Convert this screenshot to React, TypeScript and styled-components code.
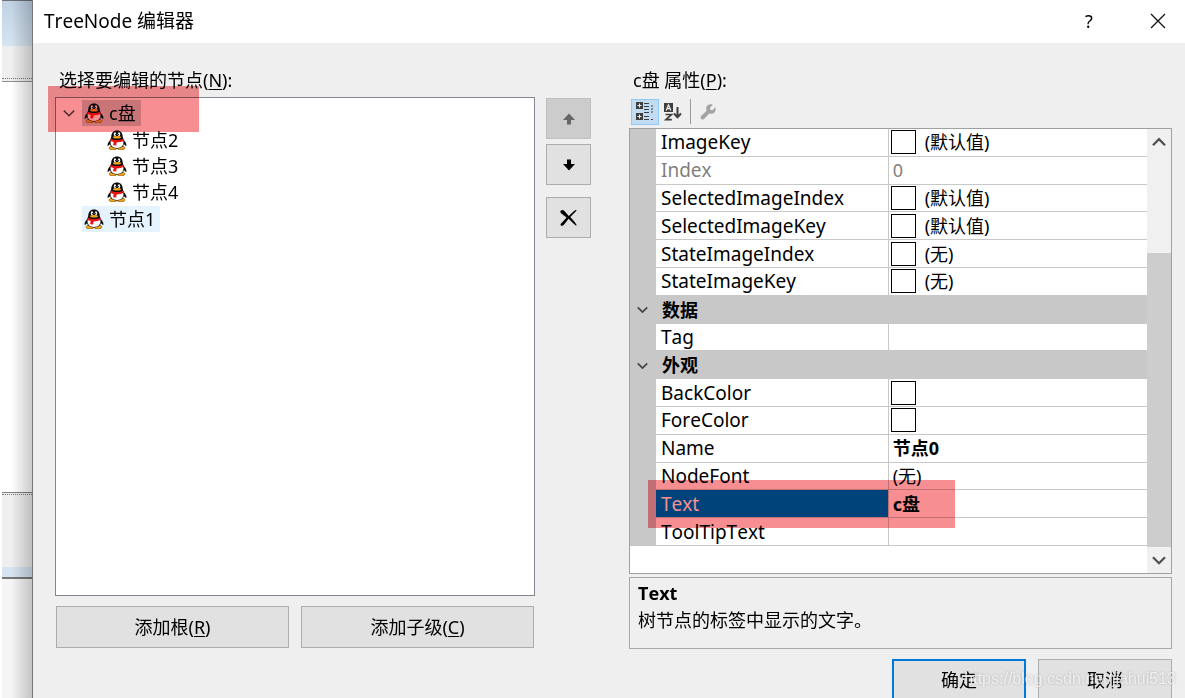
import React from "react";
import styled, { createGlobalStyle } from "styled-components";

const GlobalStyle = createGlobalStyle`
  *, *::before, *::after { box-sizing: border-box; }
  body {
    margin: 0;
    background: #fff;
    color: #000;
    font-family: "Noto Sans", "Noto Sans CJK SC", sans-serif;
    font-size: 18px;
    font-kerning: none;
    line-height: 24px;
    overflow: hidden;
  }
  button { font: inherit; color: inherit; padding: 0; margin: 0; }
  u { text-underline-offset: 2px; text-decoration-thickness: 1px; }
`;

const Desktop = styled.div`
  display: flex;
  min-height: 100vh;
`;

const Backdrop = styled.aside`
  position: relative;
  display: flex;
  flex-direction: column;
  flex: 0 0 32px;
  padding-left: 2px;

  &::after {
    content: "";
    position: absolute;
    inset: 0 0 0 2px;
    background: linear-gradient(to right, transparent 30%, rgba(0, 0, 0, 0.2));
  }
`;

const BackdropCaption = styled.div`
  flex: 0 0 46px;
  border-top: 1px solid #6d7278;
  background: linear-gradient(#c0d2e4, #d6e4f1);
`;

const BackdropToolbar = styled.div`
  flex: 0 0 36px;
  padding-top: 32px;
  background: #efefef;
  border-bottom: 1px solid #8c9096;

  &::after {
    content: "";
    display: block;
    border-top: 1px dotted #777;
  }
`;

const BackdropPage = styled.div`
  flex: 0 0 410px;
  background: #fff;
`;

const BackdropFooter = styled.div`
  flex: 0 0 75px;
  padding-top: 1px;
  background: #efefef;
  border-top: 1px solid #7d8187;

  &::after {
    content: "";
    display: block;
    border-top: 1px dotted #777;
  }
`;

const BackdropEdge = styled.div`
  flex: 0 0 12px;
  background: #d6e4f2;
  border-bottom: 2px solid #777;
`;

const BackdropRest = styled.div`
  flex: 1;
  background: #f5f5f5;
`;

const Dialog = styled.main`
  flex: 1;
  min-width: 0;
  background: #efefef;
  border-left: 1px solid #777;
`;

const TitleBar = styled.header`
  display: flex;
  align-items: center;
  height: 43px;
  padding: 0 10px 2px 11px;
  background: #fff;
`;

const Title = styled.h1`
  flex: 1;
  margin: 0;
  font-size: 19px;
  font-weight: 400;
`;

const CaptionButton = styled.button`
  display: flex;
  align-items: center;
  justify-content: center;
  width: 34px;
  height: 30px;
  margin-left: 35px;
  border: 0;
  background: none;
`;

const Body = styled.div`
  display: grid;
  grid-template-columns: minmax(0, 480fr) 94px minmax(0, 543fr);
  padding: 25px 13px 0 22px;
`;

const Column = styled.section`
  display: flex;
  flex-direction: column;
`;

const Caption = styled.h2`
  margin: 0;
  padding-left: 4px;
  font-size: 18px;
  font-weight: 400;
  line-height: 24px;
`;

const TreeBox = styled.div`
  position: relative;
  height: 499px;
  margin-top: 5px;
  border: 1px solid #828790;
  background: #fff;
`;

const TreeList = styled.ul`
  display: flex;
  flex-direction: column;
  height: 132px;
  margin: 2px 0 0;
  padding: 0;
  list-style: none;
`;

const TreeRow = styled.li<{ $depth: number }>`
  display: flex;
  flex: 1;
  align-items: center;
  padding-left: ${(p) => 4 + p.$depth * 23}px;
`;

const Expander = styled.span`
  display: flex;
  justify-content: center;
  width: 18px;
  margin-right: 4px;
`;

const NodeLabel = styled.span<{ $tone?: string }>`
  display: flex;
  align-items: center;
  gap: 5px;
  height: 26px;
  padding: 0 5px 0 2px;
  background: ${(p) => p.$tone ?? "transparent"};
`;

const Marker = styled.div<{ $top: number; $left: number; $width: number; $height: number }>`
  position: absolute;
  top: ${(p) => p.$top}px;
  left: ${(p) => p.$left}px;
  width: ${(p) => p.$width}px;
  height: ${(p) => p.$height}px;
  background: #f78e92;
  mix-blend-mode: multiply;
  pointer-events: none;
`;

const ButtonRow = styled.div`
  display: flex;
  gap: 12px;
  padding: 10px 1px 0;
`;

const PushButton = styled.button<{ $primary?: boolean }>`
  flex: 1;
  height: 42px;
  border: ${(p) => (p.$primary ? "2px solid #0078d7" : "1px solid #adadad")};
  background: #e1e1e1;
`;

const OrderColumn = styled.div`
  display: flex;
  flex-direction: column;
  gap: 5px;
  padding: 30px 38px 0 11px;
`;

const SquareButton = styled.button<{ $apart?: boolean }>`
  display: flex;
  align-items: center;
  justify-content: center;
  height: 41px;
  margin-top: ${(p) => (p.$apart ? 7 : 0)}px;
  border: 1px solid #adadad;
  background: #e1e1e1;

  &:disabled { background: #ccc; border-color: #bfbfbf; }
`;

const Toolbar = styled.div`
  display: flex;
  align-items: center;
  height: 36px;
  padding: 5px 0 2px 2px;
`;

const ToolButton = styled.button<{ $active?: boolean }>`
  display: flex;
  align-items: center;
  justify-content: center;
  width: 28px;
  height: 26px;
  border: 1px solid ${(p) => (p.$active ? "#90c8f6" : "transparent")};
  background: ${(p) => (p.$active ? "#c2dcf3" : "transparent")};
`;

const ToolDivider = styled.span`
  width: 1px;
  height: 25px;
  margin: 0 3px;
  background: #9a9a9a;
`;

const GridBox = styled.div`
  position: relative;
  display: flex;
  height: 446px;
  border: 1px solid #a0a0a0;
  background: #fff;
`;

const GridPane = styled.div`
  flex: 1;
  min-width: 0;
`;

const Properties = styled.table`
  width: 100%;
  height: 417px;
  border-collapse: separate;
  border-spacing: 0;
  table-layout: fixed;
  line-height: 22px;

  th, td { height: 27px; padding: 0; text-align: left; font-weight: 400; white-space: nowrap; }
`;

const Gutter = styled.td`
  width: 26px;
  background: #c8c8c8;
`;

const NameCell = styled.th<{ $selected?: boolean; $dim?: boolean }>`
  border-right: 1px solid #c8c8c8;
  border-bottom: 1px solid #c8c8c8;
  color: ${(p) => (p.$selected ? "#fff" : p.$dim ? "#808080" : "#000")};
  background: ${(p) => (p.$selected ? "#0078d7" : "#fff")};
  font-size: 19px;

  &&& { padding-left: 5px; }
`;

const ValueCell = styled.td<{ $bold?: boolean; $dim?: boolean }>`
  border-bottom: 1px solid #c8c8c8;
  color: ${(p) => (p.$dim ? "#808080" : "#000")};

  &&& { padding-left: 4px; font-weight: ${(p) => (p.$bold ? 700 : 400)}; }
`;

const SwatchValue = styled.span`
  display: flex;
  align-items: center;
  gap: 9px;
  margin-left: -2px;
`;

const Swatch = styled.span`
  width: 25px;
  height: 24px;
  border: 1px solid #000;
  background: #fff;
`;

const CategoryCell = styled.th`
  background: #c8c8c8;

  &&& { padding-left: 6px; font-weight: 700; }
`;

const GutterMark = styled.span`
  display: flex;
  justify-content: center;
  padding-right: 2px;
`;

const ScrollBar = styled.div`
  display: flex;
  flex-direction: column;
  width: 24px;
  background: #f0f0f0;
`;

const ScrollButton = styled.button`
  display: flex;
  align-items: center;
  justify-content: center;
  height: 26px;
  border: 0;
  background: none;
`;

const ScrollTrack = styled.div`
  display: flex;
  flex: 1;
  flex-direction: column;
  justify-content: flex-end;
`;

const ScrollThumb = styled.div`
  height: 75%;
  background: #cdcdcd;
`;

const HelpBox = styled.div`
  height: 72px;
  margin-top: 3px;
  padding: 2px 8px;
  border: 1px solid #a8a8a8;
`;

const HelpTitle = styled.h3`
  margin: 0;
  font-size: 18px;
  line-height: 26px;
`;

const HelpText = styled.p`
  margin: 0;
  line-height: 28px;
`;

const Footer = styled.footer`
  position: relative;
  display: flex;
  justify-content: flex-end;
  gap: 12px;
  padding-top: 10px;

  ${PushButton} { flex: 0 0 134px; }
`;

const Watermark = styled.span`
  position: absolute;
  right: -4px;
  top: 18px;
  color: rgba(255, 255, 255, 0.75);
  font-family: "Liberation Sans", sans-serif;
  font-size: 16px;
  text-shadow: 0 0 2px rgba(120, 120, 120, 0.5);
  pointer-events: none;
`;

const Chevron = ({ size = 10, up = false, color = "#444", weight = 2 }) => (
  <svg width={size} height={size} viewBox="0 0 10 10" fill="none" stroke={color} strokeWidth={weight} aria-hidden="true">
    <path d={up ? "M0.7 7.3 5 3l4.300 4.300" : "M0.700 3 5 7.300 9.300 3"} />
  </svg>
);

const Penguin = () => (
  <svg width="20" height="20" viewBox="0 0 20 20" aria-hidden="true">
    <ellipse cx="6" cy="18" rx="4" ry="1.900" fill="#efa51c" stroke="#6d4506" strokeWidth=".5" />
    <ellipse cx="14" cy="18" rx="4" ry="1.900" fill="#efa51c" stroke="#6d4506" strokeWidth=".5" />
    <path d="M4.500 9C2.500 10.500.6 13 .5 15.200c0 1 .9.900 2.300-.6zM15.500 9c2 1.500 3.900 4 4 6.200 0 1-.9.900-2.300-.6z" fill="#0b0b0b" />
    <path d="M10 .4C6.300.4 4.300 3 4.300 6.500c0 1-.5 2-1 3.200C2 14.500 4 18.500 10 18.500s8-4 6.700-8.800c-.5-1.200-1-2.200-1-3.200C15.700 3 13.700.4 10 .4z" fill="#0b0b0b" />
    <path d="M3.800 10.500C2.800 14.800 5 18 10 18s7.200-3.200 6.200-7.500z" fill="#fff" />
    <ellipse cx="8" cy="4.200" rx="1.200" ry="1.900" fill="#fff" />
    <ellipse cx="12" cy="4.200" rx="1.200" ry="1.900" fill="#fff" />
    <ellipse cx="8.400" cy="4.500" rx=".5" ry=".8" />
    <ellipse cx="11.600" cy="4.500" rx=".5" ry=".8" />
    <ellipse cx="10" cy="7.200" rx="4" ry="1.300" fill="#f2a71b" />
    <path d="M3.700 8.600c3.500 2 9.100 2 12.600 0l.6 2.100c-2.400 1.300-5 1.700-7.300 1.700l-.4 3.200-3.100-.3.600-3.300c-1.300-.3-2.500-.7-3.500-1.300z" fill="#e81414" />
  </svg>
);

const ArrowIcon = ({ down = false, color = "#000" }) => (
  <svg width="14" height="14" viewBox="0 0 14 14" fill={color} aria-hidden="true">
    <path d={down ? "M5 1.500h4V6h4L7 12.500 1 6h4z" : "M5 12.500h4V8h4L7 1.500 1 8h4z"} />
  </svg>
);

const DeleteIcon = () => (
  <svg width="20" height="20" viewBox="0 0 20 20" aria-hidden="true">
    <path d="M1.700 2.700c1-1.200 2.700-.8 3.700.3L9.800 8l4.700-4.600c1-.9 2.300-1.700 2.900-1.400.5.300-.2 1.100-1.200 2L11.300 9l4.600 5.300 1.900 2.900-1 .2-2.600-2.200-4.600-4.400-4.500 5.600c-1 1.500-2.800 1.900-3.400.9-.5-.8.100-1.700 1.400-2.700L7.600 9.600 2.300 5.400c-.9-.7-1.300-1.700-.6-2.700z" />
  </svg>
);

const CategorizedIcon = () => (
  <svg width="18" height="19" viewBox="0 0 18 19" aria-hidden="true">
    <path fill="#3f3f3f" d="M0 0h7v7H0zM0 11h7v7H0z" />
    <path stroke="#e4f0fa" d="M1.500 3.500h4M3.500 1.500v4M1.500 14.500h4M3.500 12.500v4" />
    <path stroke="#3f3f3f" strokeWidth="1.200" d="M8 1.500h5M8 4.500h5M8 7.500h5M8 10.500h5M8 14.500h5M8 17.500h5M15 4h2M15 7h2M15 10h2M15 17.500h2" />
  </svg>
);

const SortIcon = () => (
  <svg width="18" height="18" viewBox="0 0 18 18" fill="none" aria-hidden="true">
    <path fill="#3f3f3f" d="M0 0h9v9H0z" />
    <path stroke="#f4f4f4" strokeWidth="1.200" d="M2.200 7.500 4.500 1.800l2.300 5.700M3 5.700h3" />
    <path stroke="#3f3f3f" strokeWidth="1.700" d="M1.500 11.500h6l-5.700 5.200h6" />
    <path stroke="#3f3f3f" strokeWidth="2" d="M13.500 4v10M10 10.500l3.500 3.700 3.500-3.700" />
  </svg>
);

const WrenchIcon = () => (
  <svg width="16" height="16" viewBox="0 0 16 16" aria-hidden="true">
    <path fill="#a3a3a3" d="M13 .8 9.900 3.700l.4 2.100 2.100.4 3-3c.8 2.600-.2 5.300-2.500 6.300-1.300.5-2.500.4-3.600 0l-5 5.300c-.9.900-2.200 1-3.100.1-.9-.9-.9-2.200.1-3.100l5.300-5C5.600 3.300 6.700 1.500 8.700.7 10.200.1 11.700.1 13 .8z" />
  </svg>
);

const nodes = [
  { text: "c盘", depth: 0, open: true, tone: "#d0d0d0" },
  { text: "节点2", depth: 1 },
  { text: "节点3", depth: 1 },
  { text: "节点4", depth: 1 },
  { text: "节点1", depth: 0, tone: "#e5f3ff" },
];

type Property = {
  name: string;
  value?: string;
  swatch?: boolean;
  category?: boolean;
  dim?: boolean;
  bold?: boolean;
  selected?: boolean;
};

const properties: Property[] = [
  { name: "ImageKey", value: "(默认值)", swatch: true },
  { name: "Index", value: "0", dim: true },
  { name: "SelectedImageIndex", value: "(默认值)", swatch: true },
  { name: "SelectedImageKey", value: "(默认值)", swatch: true },
  { name: "StateImageIndex", value: "(无)", swatch: true },
  { name: "StateImageKey", value: "(无)", swatch: true },
  { name: "数据", category: true },
  { name: "Tag" },
  { name: "外观", category: true },
  { name: "BackColor", swatch: true },
  { name: "ForeColor", swatch: true },
  { name: "Name", value: "节点0", bold: true },
  { name: "NodeFont", value: "(无)" },
  { name: "Text", value: "c盘", bold: true, selected: true },
  { name: "ToolTipText" },
];

const PropertyRow = ({ item }: { item: Property }) =>
  item.category ? (
    <tr>
      <Gutter><GutterMark><Chevron size={11} weight={1.6} /></GutterMark></Gutter>
      <CategoryCell colSpan={2} scope="rowgroup">{item.name}</CategoryCell>
    </tr>
  ) : (
    <tr>
      <Gutter />
      <NameCell scope="row" $selected={item.selected} $dim={item.dim}>{item.name}</NameCell>
      <ValueCell $bold={item.bold} $dim={item.dim}>
        {item.swatch ? <SwatchValue><Swatch />{item.value}</SwatchValue> : item.value}
      </ValueCell>
    </tr>
  );

const GutterCol = styled.col`
  width: 26px;
`;

const NameCol = styled.col`
  width: 45%;
`;

export default function App() {
  return (
    <>
      <GlobalStyle />
      <Desktop>
        <Backdrop aria-hidden="true">
          <BackdropCaption />
          <BackdropToolbar />
          <BackdropPage />
          <BackdropFooter />
          <BackdropEdge />
          <BackdropRest />
        </Backdrop>
        <Dialog>
          <TitleBar>
            <Title>TreeNode 编辑器</Title>
            <CaptionButton aria-label="帮助">?</CaptionButton>
            <CaptionButton aria-label="关闭">
              <svg width="16" height="16" viewBox="0 0 16 16" stroke="#111" strokeWidth="1.300" aria-hidden="true">
                <path d="M1 1l14 14M15 1 1 15" />
              </svg>
            </CaptionButton>
          </TitleBar>
          <Body>
            <Column>
              <Caption>选择要编辑的节点(<u>N</u>):</Caption>
              <TreeBox>
                <TreeList role="tree">
                  {nodes.map((node) => (
                    <TreeRow key={node.text} role="treeitem" $depth={node.depth}>
                      <Expander>{node.open && <Chevron size={12} color="#555" weight={1.3} />}</Expander>
                      <NodeLabel $tone={node.tone}><Penguin />{node.text}</NodeLabel>
                    </TreeRow>
                  ))}
                </TreeList>
                <Marker $top={-12} $left={-8} $width={151} $height={46} />
              </TreeBox>
              <ButtonRow>
                <PushButton>添加根(<u>R</u>)</PushButton>
                <PushButton>添加子级(<u>C</u>)</PushButton>
              </ButtonRow>
            </Column>
            <OrderColumn>
              <SquareButton disabled aria-label="上移"><ArrowIcon color="#666" /></SquareButton>
              <SquareButton aria-label="下移"><ArrowIcon down /></SquareButton>
              <SquareButton $apart aria-label="删除"><DeleteIcon /></SquareButton>
            </OrderColumn>
            <Column>
              <Caption>c盘 属性(<u>P</u>):</Caption>
              <Toolbar>
                <ToolButton $active aria-label="按分类顺序"><CategorizedIcon /></ToolButton>
                <ToolButton aria-label="字母顺序"><SortIcon /></ToolButton>
                <ToolDivider />
                <ToolButton disabled aria-label="属性页"><WrenchIcon /></ToolButton>
              </Toolbar>
              <GridBox>
                <GridPane>
                  <Properties>
                    <colgroup>
                      <GutterCol />
                      <NameCol />
                      <col />
                    </colgroup>
                    <tbody>
                      {properties.map((item) => <PropertyRow key={item.name} item={item} />)}
                    </tbody>
                  </Properties>
                </GridPane>
                <ScrollBar>
                  <ScrollButton aria-label="向上滚动"><Chevron size={14} up color="#505050" weight={1.6} /></ScrollButton>
                  <ScrollTrack><ScrollThumb /></ScrollTrack>
                  <ScrollButton aria-label="向下滚动"><Chevron size={14} color="#505050" weight={1.6} /></ScrollButton>
                </ScrollBar>
                <Marker $top={351} $left={18} $width={307} $height={48} />
              </GridBox>
              <HelpBox>
                <HelpTitle>Text</HelpTitle>
                <HelpText>树节点的标签中显示的文字。</HelpText>
              </HelpBox>
              <Footer>
                <PushButton $primary>确定</PushButton>
                <PushButton>取消</PushButton>
                <Watermark>https://blog.csdn.net/jiahui513</Watermark>
              </Footer>
            </Column>
          </Body>
        </Dialog>
      </Desktop>
    </>
  );
}
